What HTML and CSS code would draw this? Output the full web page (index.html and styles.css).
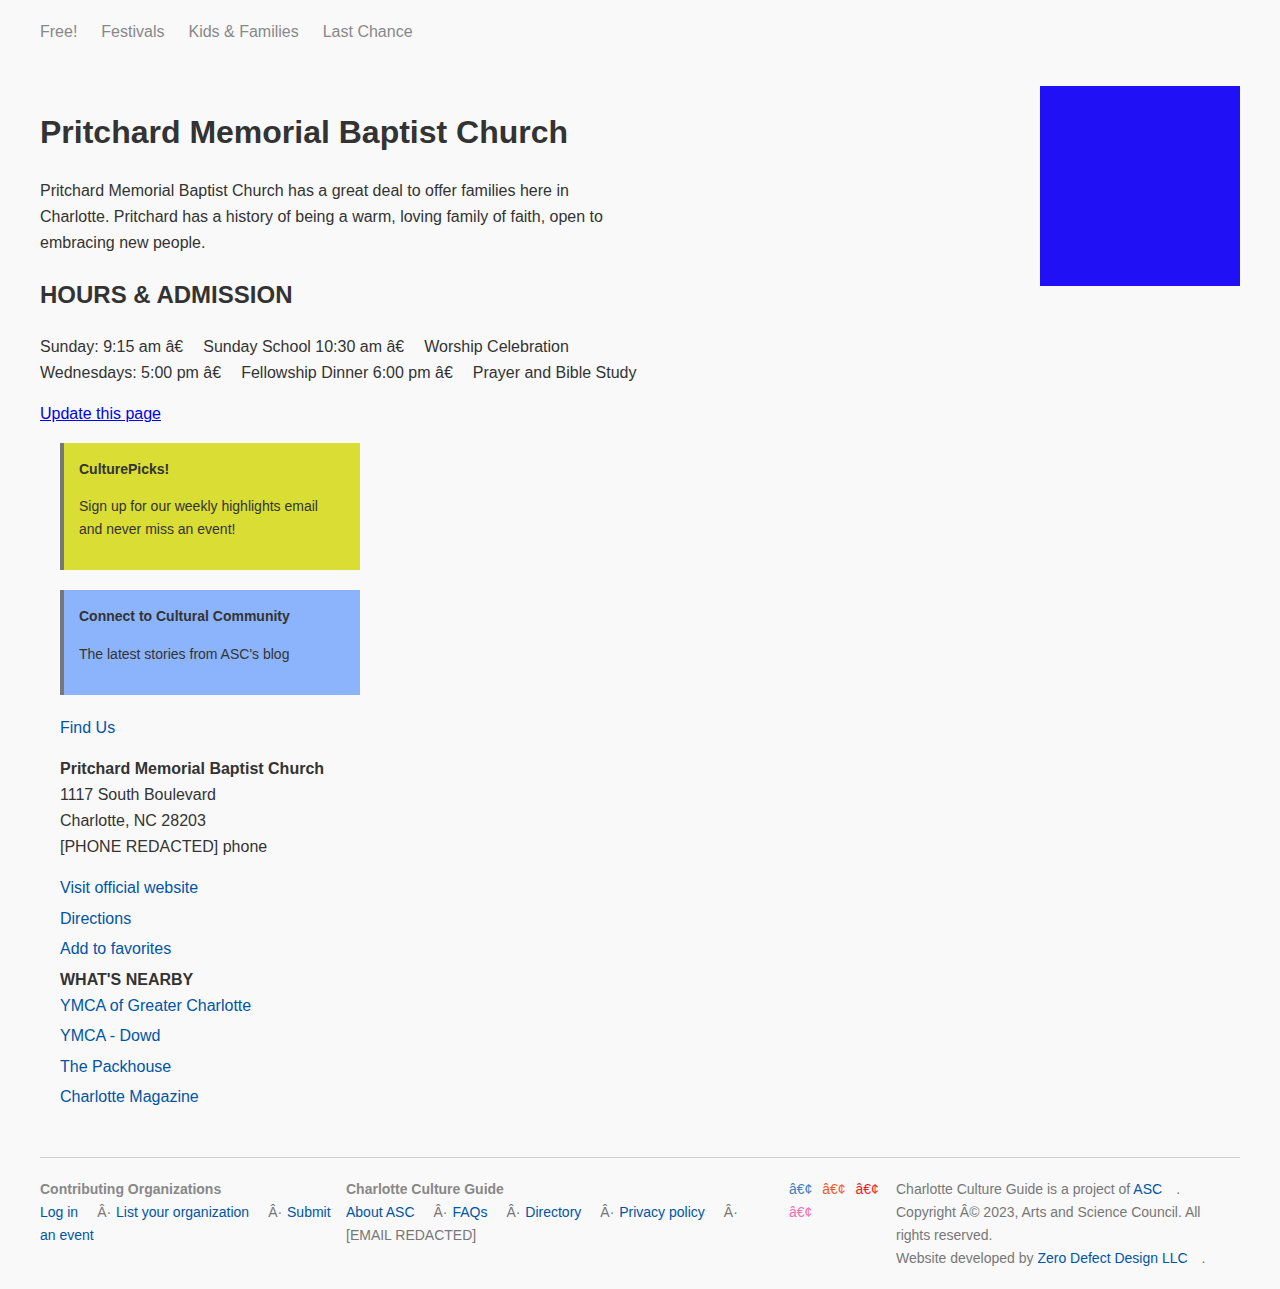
FILE: index.html
```html
<!DOCTYPE html>
<html lang="en">
<head>
<meta charset="utf-8">
<title>Pritchard Memorial Baptist Church</title>
<link rel="stylesheet" href="styles.css">
</head>
<body>
<div class="page">
  <nav class="topnav">
    <a href="#">Free!</a>
    <a href="#">Festivals</a>
    <a href="#">Kids &amp; Families</a>
    <a href="#">Last Chance</a>
  </nav>

  <div class="top-row">
    <main class="content">
      <h1 class="title">Pritchard Memorial Baptist Church</h1>
      <p class="intro">Pritchard Memorial Baptist Church has a great deal to offer families here in Charlotte. Pritchard has a history of being a warm, loving family of faith, open to embracing new people.</p>
      <h2 class="section-title">HOURS &amp; ADMISSION</h2>
      <p class="hours">Sunday: 9:15 am <span class="moj">â€</span>Sunday School 10:30 am <span class="moj">â€</span>Worship Celebration<br>Wednesdays: 5:00 pm <span class="moj">â€</span>Fellowship Dinner 6:00 pm <span class="moj">â€</span>Prayer and Bible Study</p>
      <p class="update"><a href="#">Update this page</a></p>
    </main>
    <div class="ad-square"></div>
  </div>

  <aside class="sidebar">
    <div class="promo promo-yellow">
      <h3 class="promo-title">CulturePicks!</h3>
      <p class="promo-text">Sign up for our weekly highlights email and never miss an event!</p>
    </div>
    <div class="promo promo-blue">
      <h3 class="promo-title">Connect to Cultural Community</h3>
      <p class="promo-text">The latest stories from ASC's blog</p>
    </div>

    <a class="find-us" href="#">Find Us</a>
    <div class="address">
      <strong>Pritchard Memorial Baptist Church</strong><br>
      1117 South Boulevard<br>
      Charlotte, NC 28203<br>
      [PHONE REDACTED] phone
    </div>
    <a class="side-link" href="#">Visit official website</a>
    <a class="side-link" href="#">Directions</a>
    <a class="side-link" href="#">Add to favorites</a>
    <div class="nearby-title">WHAT'S NEARBY</div>
    <a class="side-link" href="#">YMCA of Greater Charlotte</a>
    <a class="side-link" href="#">YMCA - Dowd</a>
    <a class="side-link" href="#">The Packhouse</a>
    <a class="side-link" href="#">Charlotte Magazine</a>
  </aside>

  <footer class="footer">
    <div class="fcol">
      <div class="fhead">Contributing Organizations</div>
      <div class="ftext"><a href="#">Log in</a><span class="sep">Â·</span> <a href="#">List your organization</a><span class="sep">Â·</span> <a href="#">Submit</a> <a href="#">an event</a></div>
    </div>
    <div class="fcol">
      <div class="fhead">Charlotte Culture Guide</div>
      <div class="ftext"><a href="#">About ASC</a><span class="sep">Â·</span> <a href="#">FAQs</a><span class="sep">Â·</span> <a href="#">Directory</a><span class="sep">Â·</span> <a href="#">Privacy policy</a><span class="sep">Â·</span> [EMAIL REDACTED]</div>
    </div>
    <div class="fcol social">
      <span class="b b1">â€¢</span> <span class="b b2">â€¢</span> <span class="b b3">â€¢</span> <span class="b b4">â€¢</span>
    </div>
    <div class="fcol credits">
      <p>Charlotte Culture Guide is a project of <a href="#">ASC</a><span class="gap"></span>.</p>
      <p>Copyright Â© 2023, Arts and Science Council. All rights reserved.</p>
      <p>Website developed by <a href="#">Zero Defect Design LLC</a><span class="gap"></span>.</p>
    </div>
  </footer>
</div>
</body>
</html>
```

FILE: styles.css
```css
html, body {
  margin: 0;
  padding: 0;
  background: #f9f9f9;
}

body {
  font-family: "Liberation Sans", Arial, Helvetica, sans-serif;
  font-size: 16px;
  line-height: 26px;
  color: #333;
}

.page {
  padding: 0 40px;
}

/* top navigation */
.topnav {
  display: flex;
  gap: 24px;
  padding: 20px 0;
  line-height: 24px;
}

.topnav a {
  color: #888;
  text-decoration: none;
}

/* main row */
.top-row {
  display: flex;
  justify-content: space-between;
  align-items: flex-start;
  margin-top: 22px;
}

.content {
  width: 600px;
}

.ad-square {
  width: 200px;
  height: 200px;
  background: #1f10f6;
  flex: none;
}

.title {
  margin: 26px 0 26px;
  font-size: 32px;
  line-height: 40px;
  font-weight: bold;
  color: #333;
}

.intro {
  margin: 0 0 24px;
}

.section-title {
  margin: 0 0 24px;
  font-size: 24px;
  line-height: 30px;
  font-weight: bold;
}

.hours {
  margin: 0 0 15px;
}

.moj {
  margin-right: 20px;
}

.update {
  margin: 0 0 16px;
}

.update a {
  color: #0000ee;
  text-decoration: underline;
}

/* sidebar */
.sidebar {
  margin-left: 20px;
  width: 300px;
  display: flex;
  flex-direction: column;
  align-items: flex-start;
}

.promo {
  box-sizing: border-box;
  width: 300px;
  border-left: 4px solid #777;
  padding: 15px;
  margin-bottom: 20px;
  font-size: 14px;
  line-height: 22.4px;
  color: #333;
}

.promo-yellow {
  background: #dadd33;
}

.promo-blue {
  background: #8cb4fc;
}

.promo-title {
  margin: 0 0 15px;
  font-size: 14px;
  line-height: 22.4px;
  font-weight: bold;
}

.promo-text {
  margin: 0 0 15px;
}

.find-us {
  color: #0054a6;
  text-decoration: none;
  margin-bottom: 15px;
}

.address {
  margin-bottom: 15px;
}

.side-link {
  color: #0054a6;
  text-decoration: none;
  margin-bottom: 4.5px;
}

.nearby-title {
  font-weight: bold;
}

/* footer */
.footer {
  margin-top: 42px;
  border-top: 1px solid #cfcfcf;
  padding: 20px 0 20px;
  display: grid;
  grid-template-columns: 306px 443px 107px 1fr;
  font-size: 14px;
  line-height: 23px;
  color: #777;
}

.fhead {
  font-weight: bold;
  color: #888;
}

.fcol a {
  color: #0054a6;
  text-decoration: none;
}

.ftext {
  padding-right: 4px;
}

.sep {
  margin-left: 19px;
  margin-right: 1px;
  color: #777;
}

.social {
  padding-right: 10px;
}

.b {
  margin-right: 6px;
}

.b1 { color: #3d7dc0; }
.b2 { color: #f15a22; }
.b3 { color: #ed1c24; }
.b4 { color: #f36fb0; }

.credits {
  padding-right: 16px;
}

.credits p {
  margin: 0;
}

.gap {
  display: inline-block;
  width: 14px;
}
```
